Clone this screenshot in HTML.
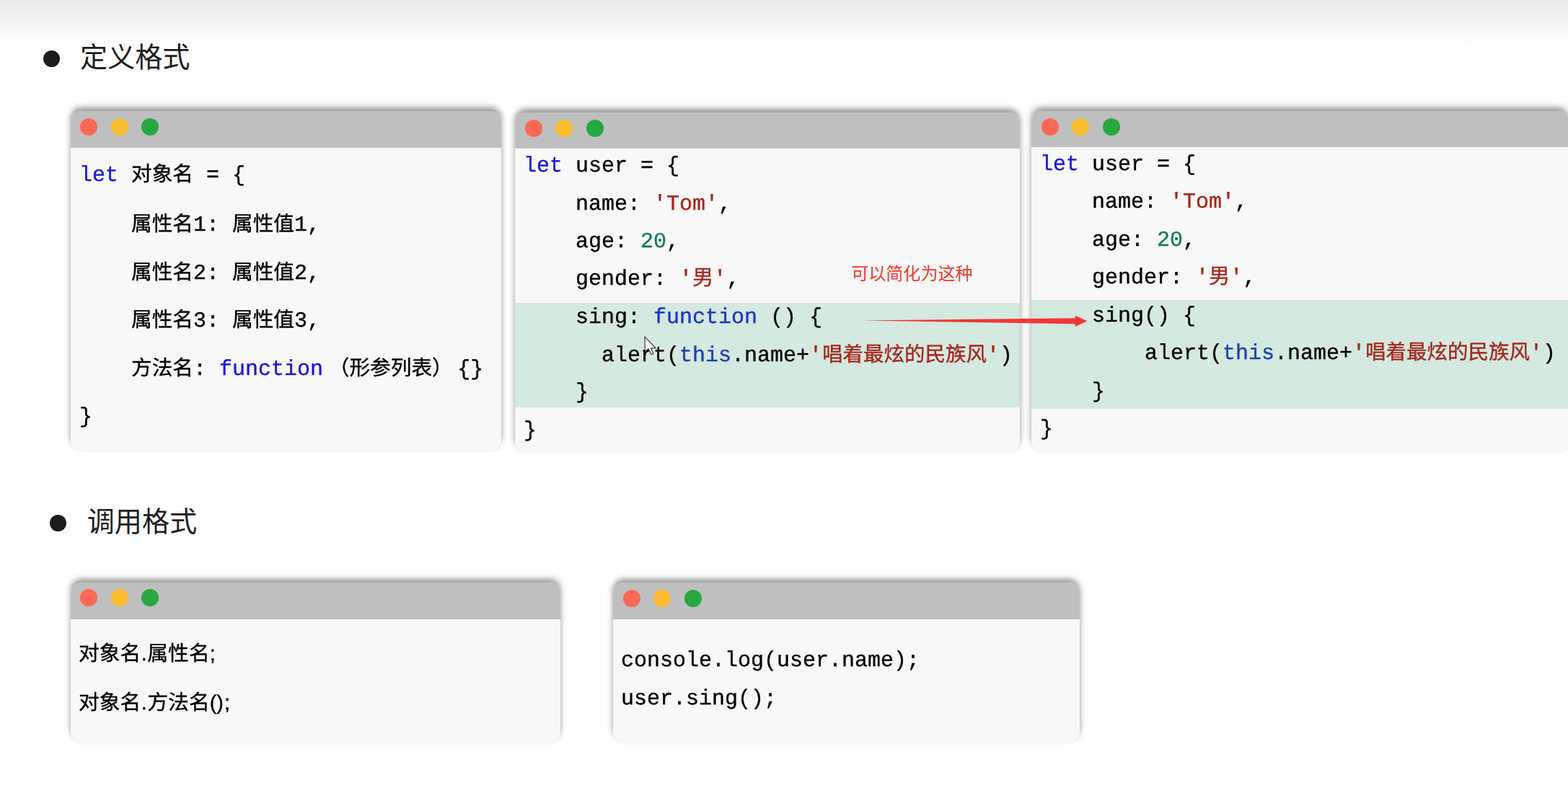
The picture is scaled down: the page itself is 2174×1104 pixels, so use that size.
<!DOCTYPE html>
<html lang="zh-CN">
<head>
<meta charset="utf-8">
<title>JS 对象 - 定义格式 / 调用格式</title>
<style>
html,body{margin:0;padding:0;overflow:hidden}
body{width:2174px;height:1104px;position:relative;overflow:hidden;background:#fff;font-family:"Liberation Sans",sans-serif;color:#000}
.top{position:absolute;left:0;top:0;width:2174px;height:62px;background:linear-gradient(#ebebeb,#f3f3f3 45%,#fff)}
.bul{position:absolute;width:23px;height:23px;border-radius:50%;background:#1d1d1d}
.ttl,.note{position:absolute;white-space:nowrap;line-height:0;color:#1e1e1e}
.ttl .cj{display:block;position:relative;top:-2px;font:38.1px/38.1px "Liberation Sans","Noto Sans CJK SC",sans-serif}
.note .cj{display:block;position:relative;top:-1px;font:24.05px/24.05px "Liberation Sans","Noto Sans CJK SC",sans-serif;color:#ee3b30}
.win{position:absolute;background:#f8f8f8;border-radius:15px;overflow:hidden;box-shadow:0 -5px 8px rgba(0,0,0,.42)}
.bar{position:relative;background:#bfbfbf}
.dot{position:absolute;width:24px;height:24px;border-radius:50%}
.hl{position:absolute;left:0;right:0;background:#d4e9df}
.ln,.sn{will-change:transform;text-rendering:geometricPrecision}
.ln{position:absolute;white-space:pre;font:30.000px/40px "Liberation Mono",monospace;letter-spacing:0.0000px;color:#000;-webkit-text-stroke:.35px currentColor}
.sn{position:absolute;white-space:pre;font:28.8px/40px "Liberation Sans",sans-serif;color:#000;-webkit-text-stroke:.35px currentColor}
.cj{position:relative;display:inline}
.ln .cj{font-family:"Liberation Mono","Noto Sans CJK SC",monospace;font-size:28.67px}
.sn .cj{font-family:"Liberation Sans","Noto Sans CJK SC",sans-serif;font-size:28.8px}
.kw{color:#1616dc}.kg{color:#1b34c4}.st{color:#a5261c}.nu{color:#15795e}.th{color:#1f3fb0}
.p1{display:inline-block;width:8.9px;text-align:center}.p2{margin-left:1px}
.arrow,.cur{position:absolute}
</style>
</head>
<body>
<div class="top"></div>
<i class="bul" style="left:59.6px;top:70.2px"></i>
<div class="ttl" style="left:111.1px;top:62.8px"><span class="cj">定义格式</span></div>
<i class="bul" style="left:69px;top:714.2px"></i>
<div class="ttl" style="left:120.8px;top:706.8px"><span class="cj">调用格式</span></div>
<div class="win" style="left:97.8px;top:154.0px;width:597.6px;height:471.0px"><div class="bar" style="height:50.6px"><i class="dot" style="left:13.4px;top:9.6px;background:#fd6854"></i><i class="dot" style="left:56.2px;top:9.6px;background:#fdbd2e"></i><i class="dot" style="left:98.5px;top:9.6px;background:#27a840"></i></div></div><div class="ln" style="left:110.20px;top:224.32px"><span class="kw">let</span> <span class="cj">对象名</span> = {</div><div class="ln" style="left:110.20px;top:293.02px">    <span class="cj">属性名</span>1: <span class="cj">属性值</span>1,</div><div class="ln" style="left:110.20px;top:359.52px">    <span class="cj">属性名</span>2: <span class="cj">属性值</span>2,</div><div class="ln" style="left:110.20px;top:426.32px">    <span class="cj">属性名</span>3: <span class="cj">属性值</span>3,</div><div class="ln" style="left:110.20px;top:492.52px">    <span class="cj">方法名</span>: <span class="kw">function</span> <span class="cj" style="margin-left:-10.27px">（</span><span class="cj">形参列表</span><span class="cj" style="margin-right:-11.47px">）</span> {}</div><div class="ln" style="left:110.20px;top:559.02px">}</div>
<div class="win" style="left:714.0px;top:156.0px;width:700.0px;height:471.0px"><div class="bar" style="height:50.2px"><i class="dot" style="left:13.5px;top:10.4px;background:#fd6854"></i><i class="dot" style="left:56.0px;top:10.4px;background:#fdbd2e"></i><i class="dot" style="left:98.8px;top:10.4px;background:#27a840"></i></div><div class="hl" style="top:264.2px;height:144.4px"></div></div><div class="ln" style="left:725.90px;top:211.02px"><span class="kw">let</span> user = {</div><div class="ln" style="left:725.90px;top:264.02px">    name: <span class="st">'Tom'</span>,</div><div class="ln" style="left:725.90px;top:316.02px">    age: <span class="nu">20</span>,</div><div class="ln" style="left:725.90px;top:368.42px">    gender: <span class="st">'</span><span class="cj st" style="font-size:29.3px">男</span><span class="st">'</span>,</div><div class="ln" style="left:725.90px;top:421.42px">    sing: <span class="kg">function</span> () {</div><div class="ln" style="left:725.90px;top:473.52px">      alert(<span class="th">this</span>.name+<span class="st">'</span><span class="cj st" style="font-size:28.48px">唱着最炫的民族风</span><span class="st">'</span>)</div><div class="ln" style="left:725.90px;top:524.82px">    }</div><div class="ln" style="left:725.90px;top:577.52px">}</div>
<div class="win" style="left:1429.5px;top:154.0px;width:745.5px;height:471.5px"><div class="bar" style="height:50.2px"><i class="dot" style="left:14.3px;top:9.7px;background:#fd6854"></i><i class="dot" style="left:56.5px;top:9.7px;background:#fdbd2e"></i><i class="dot" style="left:99.1px;top:9.7px;background:#27a840"></i></div><div class="hl" style="top:261.6px;height:151.1px"></div></div><div class="ln" style="left:1442.20px;top:208.52px"><span class="kw">let</span> user = {</div><div class="ln" style="left:1442.20px;top:261.02px">    name: <span class="st">'Tom'</span>,</div><div class="ln" style="left:1442.20px;top:313.52px">    age: <span class="nu">20</span>,</div><div class="ln" style="left:1442.20px;top:366.02px">    gender: <span class="st">'</span><span class="cj st" style="font-size:29.3px">男</span><span class="st">'</span>,</div><div class="ln" style="left:1442.20px;top:418.52px">    sing() {</div><div class="ln" style="left:1443.40px;top:471.02px">        alert(<span class="th">this</span>.name+<span class="st">'</span><span class="cj st" style="font-size:28.48px">唱着最炫的民族风</span><span class="st">'</span>)</div><div class="ln" style="left:1442.20px;top:523.52px">    }</div><div class="ln" style="left:1442.20px;top:576.02px">}</div>
<div class="win" style="left:97.6px;top:808.0px;width:679.0px;height:221.5px"><div class="bar" style="height:51.4px"><i class="dot" style="left:13.9px;top:9.4px;background:#fd6854"></i><i class="dot" style="left:56.4px;top:9.4px;background:#fdbd2e"></i><i class="dot" style="left:98.9px;top:9.4px;background:#27a840"></i></div></div><div class="sn" style="left:109.20px;top:887.22px"><span class="cj">对象名</span><span class="p1">.</span><span class="cj">属性名</span>;</div><div class="sn" style="left:109.20px;top:955.12px"><span class="cj">对象名</span><span class="p1">.</span><span class="cj">方法名</span>()<span class="p2">;</span></div>
<div class="win" style="left:849.6px;top:808.0px;width:647.2px;height:221.5px"><div class="bar" style="height:51.4px"><i class="dot" style="left:14.7px;top:9.5px;background:#fd6854"></i><i class="dot" style="left:56.9px;top:9.5px;background:#fdbd2e"></i><i class="dot" style="left:99.0px;top:9.5px;background:#27a840"></i></div></div><div class="ln" style="left:861.40px;top:896.72px">console.log(user.name);</div><div class="ln" style="left:861.40px;top:950.42px">user.sing();</div>
<div class="note" style="left:1180.2px;top:368.8px"><span class="cj">可以简化为这种</span></div>
<svg class="arrow" viewBox="0 0 320 20" style="left:1190px;top:435px;width:320px;height:20px" aria-hidden="true"><path d="M3.7 9.4 L300.8 6.2 L300.8 2.4 L317.4 10.2 L300.8 18.1 L300.8 14.3 Z" fill="#f23636"/></svg>
<svg class="cur" viewBox="0 0 17 27" style="left:893px;top:466.3px;width:17px;height:27px" aria-hidden="true"><path d="M1 1.2 L1.3 21.6 L5.9 17.6 L10 25.8 L13 24.6 L9.3 16.9 L16 16.6 Z" fill="#fff" stroke="#2a2a2a" stroke-width="1.1" stroke-linejoin="round"/></svg>
</body>
</html>
